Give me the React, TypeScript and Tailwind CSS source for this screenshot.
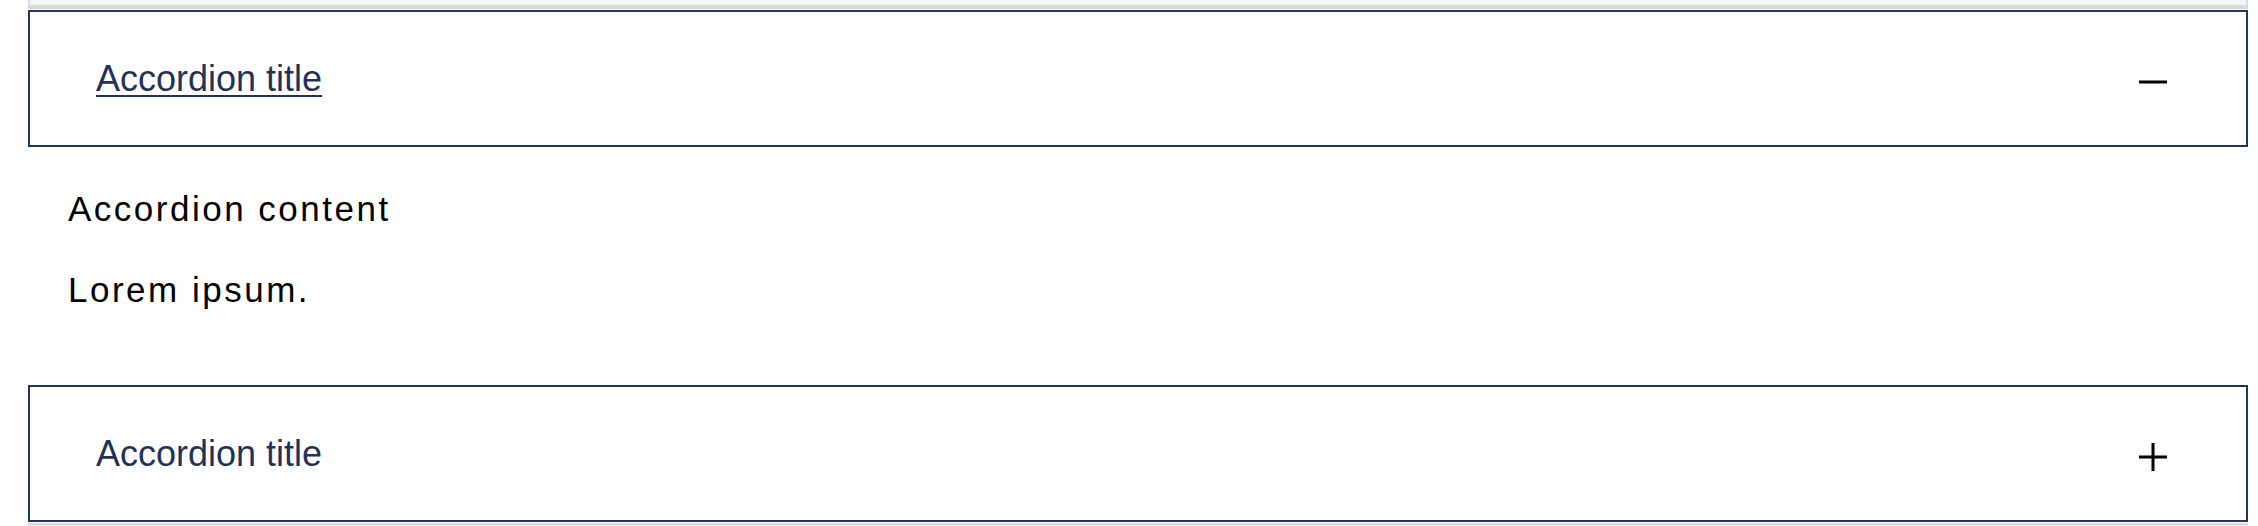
import React, { useState } from 'react';

const font = { fontFamily: '"Liberation Sans", Arial, Helvetica, sans-serif' };

const Icon = ({ open }: { open: boolean }) => (
  <svg width="28" height="28" viewBox="0 0 28 28" className="mt-[6px]">
    <line x1="0" y1="14" x2="28" y2="14" stroke="#000" strokeWidth="3" />
    {!open && <line x1="14" y1="0" x2="14" y2="28" stroke="#000" strokeWidth="3" />}
  </svg>
);

interface ItemProps {
  title: string;
  open: boolean;
  onToggle: () => void;
  children?: React.ReactNode;
}

const AccordionItem: React.FC<ItemProps> = ({ title, open, onToggle, children }) => (
  <div>
    <button
      onClick={onToggle}
      className="w-full h-[137px] flex items-center justify-between border-2 border-[#22355a] bg-white pl-[66px] pr-[79px] text-left"
    >
      <span
        className={`text-[36px] leading-[44px] text-[#1f3259] ${open ? 'underline decoration-2 underline-offset-[4px]' : ''}`}
      >
        {title}
      </span>
      <Icon open={open} />
    </button>
    {open && (
      <div className="pl-10 pt-[38px] pb-[71px] text-[35px] leading-[48px] tracking-[2.5px] text-black">
        {children}
      </div>
    )}
  </div>
);

export default function App() {
  const [openIdx, setOpenIdx] = useState<number | null>(0);

  return (
    <div className="bg-white min-h-[526px] pl-[28px] pr-[10px]" style={font}>
      <div className="h-[9px] bg-[#f4f4f4] border-x-2 border-b-4 border-[#d9d9d9] mb-px" />
      <AccordionItem title="Accordion title" open={openIdx === 0} onToggle={() => setOpenIdx(openIdx === 0 ? null : 0)}>
        <p>Accordion content</p>
        <p className="mt-[33px]">Lorem ipsum.</p>
      </AccordionItem>
      <AccordionItem title="Accordion title" open={openIdx === 1} onToggle={() => setOpenIdx(openIdx === 1 ? null : 1)}>
        <p>Accordion content</p>
        <p className="mt-[33px]">Lorem ipsum.</p>
      </AccordionItem>
      <div className="mt-px h-[10px] bg-[#ececec] border-x-2 border-t-2 border-[#d9d9d9]" />
    </div>
  );
}
